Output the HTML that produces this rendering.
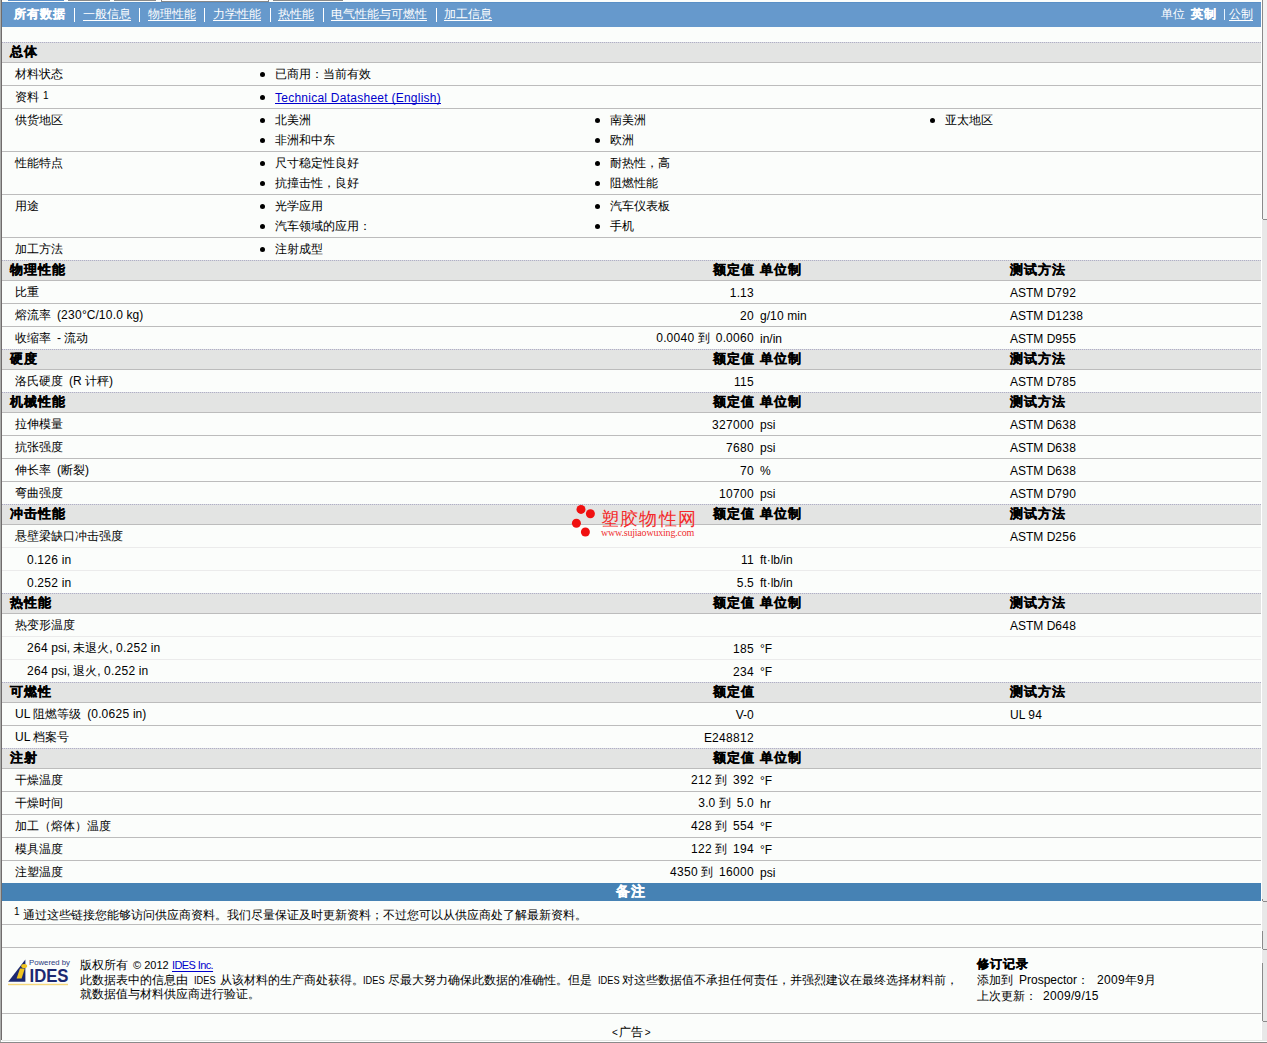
<!DOCTYPE html><html><head><meta charset="utf-8"><title>datasheet</title><style>
*{margin:0;padding:0}
html,body{width:1267px;height:1043px;overflow:hidden}
body{position:relative;background:#fbfdfb;font-family:"Liberation Sans",sans-serif;font-size:12px;line-height:12px;color:#000}
.a{position:absolute;white-space:nowrap}
.r{text-align:right}
.b{font-weight:bold;letter-spacing:1px;-webkit-text-stroke:0.3px}
.h{font-size:13px;line-height:13px}
.L{position:relative;top:1px}
.d{letter-spacing:.33px}
.w{color:#fff}
.u{text-decoration:underline;text-underline-offset:2px;text-decoration-skip-ink:none}
.lk{color:#0000cc;text-decoration:underline;text-underline-offset:2px;text-decoration-skip-ink:none}
.hl{position:absolute;left:2px;width:1259px;height:1px}
.hdr{position:absolute;left:2px;width:1259px;height:19px;background:#e3e4e3;border-top:1px solid transparent;border-bottom:1px solid #bcbcbc}
.dot{position:absolute;left:2px;width:1259px;height:1px;background:repeating-linear-gradient(90deg,#b0b0c4 0 1px,#d8d8e0 1px 2px)}
.bl{position:absolute;width:5px;height:5px;border-radius:50%;background:#000}
</style></head><body>
<div style="position:absolute;left:0;top:0;width:1px;height:1043px;background:#aaacaa"></div>
<div style="position:absolute;left:1px;top:0;width:1px;height:1040px;background:#706c6c"></div>
<div style="position:absolute;left:2px;top:1040px;width:1265px;height:1px;background:#e4e6e4"></div>
<div style="position:absolute;left:1px;top:1041px;width:1266px;height:1px;background:#fff"></div>
<div style="position:absolute;left:0;top:1042px;width:1267px;height:1px;background:#8a8a8a"></div>
<div style="position:absolute;left:1261px;top:0;width:1px;height:1040px;background:#fff"></div>
<div style="position:absolute;left:1262px;top:0;width:5px;height:1040px;background:#e8e8e8"></div>
<div style="position:absolute;left:1263px;top:0;width:4px;height:219px;background:#f2f2f2"></div>
<div style="position:absolute;left:1262px;top:0;width:1px;height:219px;background:#8a8a8a"></div>
<div style="position:absolute;left:1263px;top:219px;width:4px;height:1px;background:#8a8a8a"></div>
<div style="position:absolute;left:1262px;top:899px;width:1px;height:2px;background:#8a8a8a"></div>
<div style="position:absolute;left:1263px;top:901px;width:4px;height:1px;background:#8a8a8a"></div>
<div style="position:absolute;left:1262px;top:931px;width:1px;height:18px;background:#8a8a8a"></div>
<div style="position:absolute;left:1263px;top:949px;width:4px;height:1px;background:#8a8a8a"></div>
<div style="position:absolute;left:1262px;top:963px;width:1px;height:58px;background:#8a8a8a"></div>
<div style="position:absolute;left:1263px;top:1021px;width:4px;height:1px;background:#8a8a8a"></div>
<div style="position:absolute;left:8px;top:0;width:56px;height:1px;background:#5b8fc8"></div>
<div style="position:absolute;left:68px;top:0;width:42px;height:1px;background:#888"></div>
<div style="position:absolute;left:114px;top:0;width:42px;height:1px;background:#888"></div>
<div style="position:absolute;left:273px;top:0;width:70px;height:1px;background:#888"></div>
<div style="position:absolute;left:161px;top:0;width:106px;height:1px;border-left:1px solid #888;border-right:1px solid #888;background:#fff"></div>
<div style="position:absolute;left:161px;top:1px;width:108px;height:1px;background:#888"></div>
<div style="position:absolute;left:2px;top:2px;width:1259px;height:25px;background:#6699cc"></div>
<div style="position:absolute;left:2px;top:2px;width:1259px;height:1px;background:#5a90c6"></div>
<div class="a b w" style="left:14px;top:8px;">所有数据</div>
<div style="position:absolute;left:74px;top:8px;width:1px;height:14px;background:#fff"></div>
<div style="position:absolute;left:139px;top:8px;width:1px;height:14px;background:#fff"></div>
<div style="position:absolute;left:204px;top:8px;width:1px;height:14px;background:#fff"></div>
<div style="position:absolute;left:270px;top:8px;width:1px;height:14px;background:#fff"></div>
<div style="position:absolute;left:323px;top:8px;width:1px;height:14px;background:#fff"></div>
<div style="position:absolute;left:436px;top:8px;width:1px;height:14px;background:#fff"></div>
<div class="a w u" style="left:83px;top:8px;">一般信息</div>
<div class="a w u" style="left:148px;top:8px;">物理性能</div>
<div class="a w u" style="left:213px;top:8px;">力学性能</div>
<div class="a w u" style="left:278px;top:8px;">热性能</div>
<div class="a w u" style="left:331px;top:8px;">电气性能与可燃性</div>
<div class="a w u" style="left:444px;top:8px;">加工信息</div>
<div class="a w" style="left:1161px;top:8px;">单位</div>
<div class="a w b" style="left:1191px;top:8px;">英制</div>
<div style="position:absolute;left:1224px;top:9px;width:1px;height:11px;background:#e8f4ff"></div>
<div class="a w u" style="left:1229px;top:8px;">公制</div>
<div class="hdr" style="top:42px"></div>
<div class="dot" style="top:42px"></div>
<div class="a b h" style="left:10px;top:45px;">总体</div>
<div class="a " style="left:15px;top:68px;">材料状态</div>
<div class="bl" style="left:260px;top:72px"></div>
<div class="a " style="left:275px;top:68px;">已商用：当前有效</div>
<div class="hl" style="top:85px;background:#bcbcbc"></div>
<div class="a " style="left:15px;top:91px;">资料</div>
<div class="a " style="left:43px;top:90px;font-size:10px;line-height:10px"><span class="L"><span class="d">1</span></span></div>
<div class="bl" style="left:260px;top:95px"></div>
<div class="a lk" style="left:275px;top:91px;letter-spacing:0.25px"><span class="L">Technical Datasheet (English)</span></div>
<div class="hl" style="top:108px;background:#bcbcbc"></div>
<div class="a " style="left:15px;top:114px;">供货地区</div>
<div class="bl" style="left:260px;top:118px"></div>
<div class="a " style="left:275px;top:114px;">北美洲</div>
<div class="bl" style="left:260px;top:138px"></div>
<div class="a " style="left:275px;top:134px;">非洲和中东</div>
<div class="bl" style="left:595px;top:118px"></div>
<div class="a " style="left:610px;top:114px;">南美洲</div>
<div class="bl" style="left:595px;top:138px"></div>
<div class="a " style="left:610px;top:134px;">欧洲</div>
<div class="bl" style="left:930px;top:118px"></div>
<div class="a " style="left:945px;top:114px;">亚太地区</div>
<div class="hl" style="top:151px;background:#bcbcbc"></div>
<div class="a " style="left:15px;top:157px;">性能特点</div>
<div class="bl" style="left:260px;top:161px"></div>
<div class="a " style="left:275px;top:157px;">尺寸稳定性良好</div>
<div class="bl" style="left:260px;top:181px"></div>
<div class="a " style="left:275px;top:177px;">抗撞击性，良好</div>
<div class="bl" style="left:595px;top:161px"></div>
<div class="a " style="left:610px;top:157px;">耐热性，高</div>
<div class="bl" style="left:595px;top:181px"></div>
<div class="a " style="left:610px;top:177px;">阻燃性能</div>
<div class="hl" style="top:194px;background:#bcbcbc"></div>
<div class="a " style="left:15px;top:200px;">用途</div>
<div class="bl" style="left:260px;top:204px"></div>
<div class="a " style="left:275px;top:200px;">光学应用</div>
<div class="bl" style="left:260px;top:224px"></div>
<div class="a " style="left:275px;top:220px;">汽车领域的应用：</div>
<div class="bl" style="left:595px;top:204px"></div>
<div class="a " style="left:610px;top:200px;">汽车仪表板</div>
<div class="bl" style="left:595px;top:224px"></div>
<div class="a " style="left:610px;top:220px;">手机</div>
<div class="hl" style="top:237px;background:#bcbcbc"></div>
<div class="a " style="left:15px;top:243px;">加工方法</div>
<div class="bl" style="left:260px;top:247px"></div>
<div class="a " style="left:275px;top:243px;">注射成型</div>
<div class="hdr" style="top:260px"></div>
<div class="dot" style="top:260px"></div>
<div class="a b h" style="left:10px;top:263px;">物理性能</div>
<div class="a r b h" style="right:513px;top:263px;margin-right:-1px">额定值</div>
<div class="a b h" style="left:760px;top:263px;">单位制</div>
<div class="a b h" style="left:1010px;top:263px;">测试方法</div>
<div class="a " style="left:15px;top:286px;">比重</div>
<div class="a r " style="right:513px;top:286px;"><span class="L"><span class="d">1</span>.<span class="d">13</span></span></div>
<div class="a " style="left:1010px;top:286px;"><span class="L">ASTM D<span class="d">792</span></span></div>
<div class="hl" style="top:303px;background:#bcbcbc"></div>
<div class="a " style="left:15px;top:309px;">熔流率<span style="margin-left:6px">(<span class="d">230</span>°C/<span class="d">10</span>.<span class="d">0</span> kg)</span></div>
<div class="a r " style="right:513px;top:309px;"><span class="L"><span class="d">20</span></span></div>
<div class="a " style="left:760px;top:309px;"><span class="L">g/<span class="d">10</span> min</span></div>
<div class="a " style="left:1010px;top:309px;"><span class="L">ASTM D<span class="d">1238</span></span></div>
<div class="hl" style="top:326px;background:#bcbcbc"></div>
<div class="a " style="left:15px;top:332px;">收缩率<span style="margin-left:6px">- 流动</span></div>
<div class="a r " style="right:513px;top:332px;"><span class="d">0</span>.<span class="d">0040</span><span style="margin:0 6px 0 3px">到</span><span class="d">0</span>.<span class="d">0060</span></div>
<div class="a " style="left:760px;top:332px;"><span class="L">in/in</span></div>
<div class="a " style="left:1010px;top:332px;"><span class="L">ASTM D<span class="d">955</span></span></div>
<div class="hdr" style="top:349px"></div>
<div class="dot" style="top:349px"></div>
<div class="a b h" style="left:10px;top:352px;">硬度</div>
<div class="a r b h" style="right:513px;top:352px;margin-right:-1px">额定值</div>
<div class="a b h" style="left:760px;top:352px;">单位制</div>
<div class="a b h" style="left:1010px;top:352px;">测试方法</div>
<div class="a " style="left:15px;top:375px;">洛氏硬度<span style="margin-left:6px">(R 计秤)</span></div>
<div class="a r " style="right:513px;top:375px;"><span class="L"><span class="d">115</span></span></div>
<div class="a " style="left:1010px;top:375px;"><span class="L">ASTM D<span class="d">785</span></span></div>
<div class="hdr" style="top:392px"></div>
<div class="dot" style="top:392px"></div>
<div class="a b h" style="left:10px;top:395px;">机械性能</div>
<div class="a r b h" style="right:513px;top:395px;margin-right:-1px">额定值</div>
<div class="a b h" style="left:760px;top:395px;">单位制</div>
<div class="a b h" style="left:1010px;top:395px;">测试方法</div>
<div class="a " style="left:15px;top:418px;">拉伸模量</div>
<div class="a r " style="right:513px;top:418px;"><span class="L"><span class="d">327000</span></span></div>
<div class="a " style="left:760px;top:418px;"><span class="L">psi</span></div>
<div class="a " style="left:1010px;top:418px;"><span class="L">ASTM D<span class="d">638</span></span></div>
<div class="hl" style="top:435px;background:#bcbcbc"></div>
<div class="a " style="left:15px;top:441px;">抗张强度</div>
<div class="a r " style="right:513px;top:441px;"><span class="L"><span class="d">7680</span></span></div>
<div class="a " style="left:760px;top:441px;"><span class="L">psi</span></div>
<div class="a " style="left:1010px;top:441px;"><span class="L">ASTM D<span class="d">638</span></span></div>
<div class="hl" style="top:458px;background:#bcbcbc"></div>
<div class="a " style="left:15px;top:464px;">伸长率<span style="margin-left:6px">(断裂)</span></div>
<div class="a r " style="right:513px;top:464px;"><span class="L"><span class="d">70</span></span></div>
<div class="a " style="left:760px;top:464px;"><span class="L">%</span></div>
<div class="a " style="left:1010px;top:464px;"><span class="L">ASTM D<span class="d">638</span></span></div>
<div class="hl" style="top:481px;background:#bcbcbc"></div>
<div class="a " style="left:15px;top:487px;">弯曲强度</div>
<div class="a r " style="right:513px;top:487px;"><span class="L"><span class="d">10700</span></span></div>
<div class="a " style="left:760px;top:487px;"><span class="L">psi</span></div>
<div class="a " style="left:1010px;top:487px;"><span class="L">ASTM D<span class="d">790</span></span></div>
<div class="hdr" style="top:504px"></div>
<div class="dot" style="top:504px"></div>
<div class="a b h" style="left:10px;top:507px;">冲击性能</div>
<div class="a r b h" style="right:513px;top:507px;margin-right:-1px">额定值</div>
<div class="a b h" style="left:760px;top:507px;">单位制</div>
<div class="a b h" style="left:1010px;top:507px;">测试方法</div>
<div class="a " style="left:15px;top:530px;">悬壁梁缺口冲击强度</div>
<div class="a " style="left:1010px;top:530px;"><span class="L">ASTM D<span class="d">256</span></span></div>
<div class="hl" style="top:547px;background:#ebebeb"></div>
<div class="a " style="left:27px;top:553px;"><span class="L"><span class="d">0</span>.<span class="d">126</span> in</span></div>
<div class="a r " style="right:513px;top:553px;"><span class="L"><span class="d">11</span></span></div>
<div class="a " style="left:760px;top:553px;"><span class="L">ft·lb/in</span></div>
<div class="hl" style="top:570px;background:#ebebeb"></div>
<div class="a " style="left:27px;top:576px;"><span class="L"><span class="d">0</span>.<span class="d">252</span> in</span></div>
<div class="a r " style="right:513px;top:576px;"><span class="L"><span class="d">5</span>.<span class="d">5</span></span></div>
<div class="a " style="left:760px;top:576px;"><span class="L">ft·lb/in</span></div>
<div class="hdr" style="top:593px"></div>
<div class="dot" style="top:593px"></div>
<div class="a b h" style="left:10px;top:596px;">热性能</div>
<div class="a r b h" style="right:513px;top:596px;margin-right:-1px">额定值</div>
<div class="a b h" style="left:760px;top:596px;">单位制</div>
<div class="a b h" style="left:1010px;top:596px;">测试方法</div>
<div class="a " style="left:15px;top:619px;">热变形温度</div>
<div class="a " style="left:1010px;top:619px;"><span class="L">ASTM D<span class="d">648</span></span></div>
<div class="hl" style="top:636px;background:#ebebeb"></div>
<div class="a " style="left:27px;top:642px;"><span class="d">264</span> psi, 未退火, <span class="d">0</span>.<span class="d">252</span> in</div>
<div class="a r " style="right:513px;top:642px;"><span class="L"><span class="d">185</span></span></div>
<div class="a " style="left:760px;top:642px;"><span class="L">°F</span></div>
<div class="hl" style="top:659px;background:#ebebeb"></div>
<div class="a " style="left:27px;top:665px;"><span class="d">264</span> psi, 退火, <span class="d">0</span>.<span class="d">252</span> in</div>
<div class="a r " style="right:513px;top:665px;"><span class="L"><span class="d">234</span></span></div>
<div class="a " style="left:760px;top:665px;"><span class="L">°F</span></div>
<div class="hdr" style="top:682px"></div>
<div class="dot" style="top:682px"></div>
<div class="a b h" style="left:10px;top:685px;">可燃性</div>
<div class="a r b h" style="right:513px;top:685px;margin-right:-1px">额定值</div>
<div class="a b h" style="left:1010px;top:685px;">测试方法</div>
<div class="a " style="left:15px;top:708px;">UL 阻燃等级<span style="margin-left:6px">(<span class="d">0</span>.<span class="d">0625</span> in)</span></div>
<div class="a r " style="right:513px;top:708px;"><span class="L">V-<span class="d">0</span></span></div>
<div class="a " style="left:1010px;top:708px;"><span class="L">UL <span class="d">94</span></span></div>
<div class="hl" style="top:725px;background:#bcbcbc"></div>
<div class="a " style="left:15px;top:731px;">UL 档案号</div>
<div class="a r " style="right:513px;top:731px;"><span class="L">E<span class="d">248812</span></span></div>
<div class="hdr" style="top:748px"></div>
<div class="dot" style="top:748px"></div>
<div class="a b h" style="left:10px;top:751px;">注射</div>
<div class="a r b h" style="right:513px;top:751px;margin-right:-1px">额定值</div>
<div class="a b h" style="left:760px;top:751px;">单位制</div>
<div class="a " style="left:15px;top:774px;">干燥温度</div>
<div class="a r " style="right:513px;top:774px;"><span class="d">212</span><span style="margin:0 6px 0 3px">到</span><span class="d">392</span></div>
<div class="a " style="left:760px;top:774px;"><span class="L">°F</span></div>
<div class="hl" style="top:791px;background:#bcbcbc"></div>
<div class="a " style="left:15px;top:797px;">干燥时间</div>
<div class="a r " style="right:513px;top:797px;"><span class="d">3</span>.<span class="d">0</span><span style="margin:0 6px 0 3px">到</span><span class="d">5</span>.<span class="d">0</span></div>
<div class="a " style="left:760px;top:797px;"><span class="L">hr</span></div>
<div class="hl" style="top:814px;background:#bcbcbc"></div>
<div class="a " style="left:15px;top:820px;">加工（熔体）温度</div>
<div class="a r " style="right:513px;top:820px;"><span class="d">428</span><span style="margin:0 6px 0 3px">到</span><span class="d">554</span></div>
<div class="a " style="left:760px;top:820px;"><span class="L">°F</span></div>
<div class="hl" style="top:837px;background:#bcbcbc"></div>
<div class="a " style="left:15px;top:843px;">模具温度</div>
<div class="a r " style="right:513px;top:843px;"><span class="d">122</span><span style="margin:0 6px 0 3px">到</span><span class="d">194</span></div>
<div class="a " style="left:760px;top:843px;"><span class="L">°F</span></div>
<div class="hl" style="top:860px;background:#bcbcbc"></div>
<div class="a " style="left:15px;top:866px;">注塑温度</div>
<div class="a r " style="right:513px;top:866px;"><span class="d">4350</span><span style="margin:0 6px 0 3px">到</span><span class="d">16000</span></div>
<div class="a " style="left:760px;top:866px;"><span class="L">psi</span></div>
<div style="position:absolute;left:2px;top:883px;width:1259px;height:18px;background:#4682b4"></div>
<div class="a b w" style="left:616px;top:884px;font-size:14px;line-height:14px">备注</div>
<div class="a " style="left:14px;top:906px;font-size:10px;line-height:10px"><span class="L"><span class="d">1</span></span></div>
<div class="a " style="left:23px;top:909px;">通过这些链接您能够访问供应商资料。我们尽量保证及时更新资料；不过您可以从供应商处了解最新资料。</div>
<div class="hl" style="top:924px;background:#bcbcbc"></div>
<div class="hl" style="top:947px;background:#bcbcbc"></div>
<svg style="position:absolute;left:7px;top:957px" width="64" height="30" viewBox="0 0 64 30">
<polygon points="1.2,24.8 18.4,2.5 18.4,24.8" fill="#1c2870"/>
<polygon points="13,11.5 17.8,11.5 14.6,21.6 9.6,21.6" fill="#f0c420"/>
<ellipse cx="17.2" cy="9" rx="3" ry="2" fill="#f0c420"/>
<text x="22" y="8" font-family="Liberation Sans" font-size="8" fill="#2a3a7c" textLength="41" lengthAdjust="spacingAndGlyphs">Powered by</text>
<text x="22.5" y="24.6" font-family="Liberation Sans" font-size="19" font-weight="bold" fill="#1c2870" textLength="39" lengthAdjust="spacingAndGlyphs">IDES</text>
<rect x="1" y="26.8" width="60" height="1.4" fill="#f5d77a"/>
</svg>
<div class="a " style="left:80px;top:959px;">版权所有</div>
<div class="a" style="left:133px;top:960px;font-size:11px;line-height:11px">© 2012</div>
<div class="a lk" style="left:172px;top:960px;font-size:11px;line-height:11px;letter-spacing:-0.6px;text-underline-offset:2px">IDES Inc.</div>
<div class="a " style="left:80px;top:974px;">此数据表中的信息由</div>
<div class="a" style="left:194px;top:975px;font-size:11px;line-height:11px;transform:scaleX(0.84);transform-origin:0 0">IDES</div>
<div class="a " style="left:220px;top:974px;">从该材料的生产商处获得。</div>
<div class="a" style="left:363px;top:975px;font-size:11px;line-height:11px;transform:scaleX(0.84);transform-origin:0 0">IDES</div>
<div class="a " style="left:388px;top:974px;">尽最大努力确保此数据的准确性。但是</div>
<div class="a" style="left:598px;top:975px;font-size:11px;line-height:11px;transform:scaleX(0.84);transform-origin:0 0">IDES</div>
<div class="a " style="left:622px;top:974px;">对这些数据值不承担任何责任，并强烈建议在最终选择材料前，</div>
<div class="a " style="left:80px;top:988px;">就数据值与材料供应商进行验证。</div>
<div class="a b" style="left:977px;top:958px;">修订记录</div>
<div class="a " style="left:977px;top:974px;">添加到<span style="margin-left:6px">Prospector：</span><span style="margin-left:8px"><span class="d">2009</span>年<span class="d">9</span>月</span></div>
<div class="a " style="left:977px;top:990px;">上次更新：<span style="margin-left:6px"><span class="d">2009</span>/<span class="d">9</span>/<span class="d">15</span></span></div>
<div class="hl" style="top:1013px;background:#bcbcbc"></div>
<div class="a " style="left:612px;top:1026px;"><span style="font-size:10px;margin-right:1.5px">&lt;</span>广告<span style="font-size:10px;margin-left:1.5px">&gt;</span></div>
<svg style="position:absolute;left:568px;top:502px" width="135" height="40" viewBox="0 0 135 40">
<circle cx="13" cy="7.4" r="4.5" fill="#f01010"/>
<circle cx="22.4" cy="11.8" r="4.5" fill="#f01010"/>
<circle cx="8.4" cy="21.2" r="4.5" fill="#f01010"/>
<circle cx="17.4" cy="30" r="4.5" fill="#f01010"/>
</svg>
<div class="a " style="left:601px;top:510px;font-size:18px;line-height:18px;color:#f42a2a;letter-spacing:1.2px">塑胶物性网</div>
<div class="a " style="left:601px;top:527px;font-family:'Liberation Serif',serif;font-size:10px;line-height:10px;color:#f03030;letter-spacing:-0.2px"><span class="L">www.sujiaowuxing.com</span></div>
</body></html>
